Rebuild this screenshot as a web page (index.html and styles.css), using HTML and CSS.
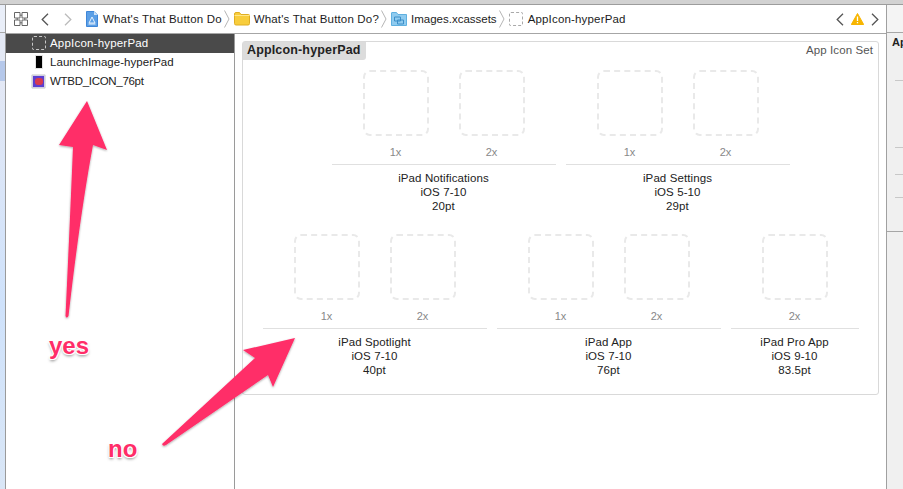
FILE: index.html
```html
<!DOCTYPE html>
<html lang="en">
<head>
<meta charset="utf-8">
<title>AppIcon-hyperPad</title>
<link rel="stylesheet" href="styles.css">
</head>
<body>
<div class="window">
  <div class="titlestrip"></div>
  <div class="workspace">
    <aside class="sidestrip">
      <div class="strip-top"></div>
      <div class="strip-a"></div>
      <div class="strip-sel"></div>
      <div class="strip-b"></div>
    </aside>
    <div class="editor">
      <header class="jumpbar">
        <svg class="gridicon" width="14" height="14" viewBox="0 0 14 14"><path d="M.5.5h5.500v5.500H.5zM8 .5h5.500v5.500H8zM.5 8h5.500v5.500H.5zM8 8h5.500v5.500H8zM6 3.200h2M6 10.800h2M3.200 6v2M10.800 6v2" fill="none" stroke="#666"/></svg>
        <svg class="nav nav-back" width="8" height="13" viewBox="0 0 8 13"><path d="M7 .8 1.200 6.500 7 12.200" fill="none" stroke="#555" stroke-width="1.300"/></svg>
        <svg class="nav nav-fwd" width="8" height="13" viewBox="0 0 8 13"><path d="M1 .8 6.800 6.500 1 12.200" fill="none" stroke="#bbb" stroke-width="1.300"/></svg>
        <span class="crumb crumb-first">
          <svg width="12" height="16" viewBox="0 0 12 16"><path d="M.5.5h7.500l3.500 3.500v11.500H.5z" fill="#5b9fe6" stroke="#3f86d8"/><path d="M8 .5v3.500h3.500z" fill="#cfe3f8"/><path d="M6 6 3 12h6zM2.500 13h7" fill="none" stroke="#e8f2fc"/></svg>
          What's That Button Do
        </span>
        <svg class="sep" width="6" height="18" viewBox="0 0 6 18"><path d="M.5.5 5 9 .5 17.500" fill="none" stroke="#b5b5b5"/></svg>
        <span class="crumb">
          <svg width="16" height="14" viewBox="0 0 16 14"><path d="M.5 2q0-1.500 1.500-1.500h3.500l1.500 2h7.500q1 0 1 1v8q0 1.500-1.500 1.500H2q-1.500 0-1.500-1.500z" fill="#f8cd3c" stroke="#e0ae22"/><path d="M.5 3.500h15" stroke="#ffe68a"/></svg>
          What's That Button Do?
        </span>
        <svg class="sep" width="6" height="18" viewBox="0 0 6 18"><path d="M.5.5 5 9 .5 17.500" fill="none" stroke="#b5b5b5"/></svg>
        <span class="crumb crumb-assets">
          <svg width="16" height="14" viewBox="0 0 16 14"><path d="M.5 1q0-.5.500-.5h4.500l1.500 2h8.500v11H.5z" fill="#8fcbef" stroke="#5fb0e0"/><path d="M3.500 5h6v4h-6zM6.500 8h6v4h-6z" fill="none" stroke="#3d8fc8"/></svg>
          Images.xcassets
        </span>
        <svg class="sep" width="6" height="18" viewBox="0 0 6 18"><path d="M.5.5 5 9 .5 17.500" fill="none" stroke="#b5b5b5"/></svg>
        <span class="crumb crumb-last">
          <span class="dashicon"></span>
          AppIcon-hyperPad
        </span>
        <span class="issues">
          <svg width="8" height="13" viewBox="0 0 8 13"><path d="M7 .8 1.200 6.500 7 12.200" fill="none" stroke="#555" stroke-width="1.300"/></svg>
          <svg width="13" height="12" viewBox="0 0 13 12"><path d="M6.500.5 12.700 11.500H.3z" fill="#f7b500" stroke="#f7b500" stroke-linejoin="round"/><path d="M6.500 3.500v4.500M6.500 9v1.200" stroke="#fff" stroke-width="1.300"/></svg>
          <svg width="8" height="13" viewBox="0 0 8 13"><path d="M1 .8 6.800 6.500 1 12.200" fill="none" stroke="#555" stroke-width="1.300"/></svg>
        </span>
      </header>
      <div class="panes">
        <nav class="navigator">
          <div class="item item-selected"><span class="dashicon"></span><span>AppIcon-hyperPad</span></div>
          <div class="item item-tight"><span class="launchslot"><span class="launchicon"></span></span><span>LaunchImage-hyperPad</span></div>
          <div class="item item-caps"><span class="imgicon"><span class="imgdot"></span></span><span>WTBD_ICON_76pt</span></div>
        </nav>
        <main class="canvas">
          <section class="card">
            <div class="card-head">
              <span class="card-title">AppIcon-hyperPad</span>
              <span class="card-type">App Icon Set</span>
            </div>
            <div class="row row-one">
              <div class="group">
                <div class="slots"><div class="slot"><div class="well"></div><span>1x</span></div><div class="slot"><div class="well"></div><span>2x</span></div></div>
                <div class="caption">iPad Notifications<br>iOS 7-10<br>20pt</div>
              </div>
              <div class="group">
                <div class="slots"><div class="slot"><div class="well"></div><span>1x</span></div><div class="slot"><div class="well"></div><span>2x</span></div></div>
                <div class="caption">iPad Settings<br>iOS 5-10<br>29pt</div>
              </div>
            </div>
            <div class="row row-two">
              <div class="group">
                <div class="slots"><div class="slot"><div class="well"></div><span>1x</span></div><div class="slot"><div class="well"></div><span>2x</span></div></div>
                <div class="caption">iPad Spotlight<br>iOS 7-10<br>40pt</div>
              </div>
              <div class="group">
                <div class="slots"><div class="slot"><div class="well"></div><span>1x</span></div><div class="slot"><div class="well"></div><span>2x</span></div></div>
                <div class="caption">iPad App<br>iOS 7-10<br>76pt</div>
              </div>
              <div class="group">
                <div class="slots"><div class="slot"><div class="well"></div><span>2x</span></div></div>
                <div class="caption">iPad Pro App<br>iOS 9-10<br>83.5pt</div>
              </div>
            </div>
          </section>
        </main>
      </div>
    </div>
    <aside class="inspector">
      <div class="insp-top"></div>
      <div class="insp-body">
        <div class="insp-title">Ap</div>
        <div class="rule rule-a"></div>
        <div class="rule rule-b"></div>
        <div class="rule rule-c"></div>
        <div class="rule rule-d"></div>
      </div>
      <div class="insp-foot"></div>
    </aside>
  </div>
  <svg class="annotations" width="903" height="489" viewBox="0 0 903 489">
    <defs>
      <filter id="shadow" x="-20%" y="-20%" width="140%" height="140%"><feDropShadow dx="0" dy="1" stdDeviation="1" flood-color="#000" flood-opacity=".35"/></filter>
    </defs>
    <path d="M87 101 59 145 73 147Q70 220 65.500 316Q66.500 319 68.500 316Q80 215 93 145L107 150z" fill="#ff2d68" filter="url(#shadow)"/>
    <path d="M295 338 243 350 255 358 162 444Q163 447 166 445L268 375 273 387z" fill="#ff2d68" filter="url(#shadow)"/>
  </svg>
  <span class="note note-yes">yes</span>
  <span class="note note-no">no</span>
</div>
</body>
</html>
```
FILE: styles.css
```css
* { box-sizing: border-box; }
html, body { margin: 0; padding: 0; }
body { font-family: "Liberation Sans", Arial, sans-serif; background: #fff; color: #222; overflow: hidden; }
.window { position: relative; width: 903px; height: 489px; display: flex; flex-direction: column; overflow: hidden; }
.titlestrip { height: 5px; background: #d2d2d2; border-bottom: 1px solid #9c9c9c; flex: none; }
.workspace { flex: 1; display: flex; min-height: 0; }

.sidestrip { width: 6px; flex: none; display: flex; flex-direction: column; border-right: 1px solid #9a9a9a; }
.strip-top { height: 28px; background: #e9eef8; border-bottom: 1px solid #a8a8a8; }
.strip-a { height: 28px; background: #e4e9f5; }
.strip-sel { height: 20px; background: #b5c8ea; }
.strip-b { flex: 1; background: linear-gradient(#e3e8f5 0, #cfe2fb 55%, #d9e6f6 100%); }

.editor { flex: 1; display: flex; flex-direction: column; min-width: 0; }
.jumpbar { height: 29px; flex: none; display: flex; align-items: center; border-bottom: 1px solid #a6a6a6; padding-left: 8px; font-size: 11.5px; color: #1c1c1c; letter-spacing: .17px; }
.gridicon { flex: none; margin-right: 13px; }
.nav { flex: none; }
.nav-fwd { margin-left: 15px; margin-right: 14px; }
.crumb { display: flex; align-items: center; gap: 4px; white-space: nowrap; }
.crumb-first { gap: 5px; }
.crumb-assets { letter-spacing: 0; }
.crumb-last { gap: 5px; }
.sep { flex: none; margin: 0 4px 0 2px; }
.issues { margin-left: auto; margin-right: 7px; display: flex; align-items: center; gap: 7px; }

.dashicon { width: 14px; height: 14px; flex: none; border: 1px dashed #a9a9a9; border-radius: 2px; display: block; }

.panes { flex: 1; display: flex; min-height: 0; }
.navigator { width: 229px; flex: none; border-right: 1px solid #9a9a9a; background: #fff; font-size: 11.5px; color: #222; }
.item { height: 19px; display: flex; align-items: center; padding: 0 0 1px 26px; gap: 4px; letter-spacing: .2px; }
.item-selected { background: #4a4a4a; color: #fff; }
.item-selected .dashicon { border-color: #c9c9c9; }
.item-tight { letter-spacing: .05px; }
.item-caps { letter-spacing: -.3px; }
.launchslot { width: 14px; height: 14px; flex: none; display: flex; justify-content: center; }
.launchicon { width: 8px; height: 14px; display: block; background: #000; border: 1px solid #e2e2e2; }
.imgicon { width: 13px; height: 13px; flex: none; display: flex; align-items: center; justify-content: center; background: #5b3fd0; border: 1px solid #cfcfe0; margin-right: 1px; box-shadow: 0 0 1px #555; }
.imgdot { width: 8px; height: 7px; border-radius: 3px; background: #d83a4f; }

.canvas { flex: 1; background: #fff; padding: 7px 7px 0 7px; min-width: 0; }
.card { height: 354px; border: 1px solid #d9d9d9; border-radius: 3px; background: #fff; }
.card-head { display: flex; justify-content: space-between; align-items: flex-start; height: 28px; }
.card-title { height: 18px; width: 123px; padding-left: 4px; line-height: 17px; background: #dcdcdc; border-radius: 0 0 3px 0; font-size: 12.5px; font-weight: bold; letter-spacing: .15px; color: #222; white-space: nowrap; }
.card-type { font-size: 11.5px; color: #555; margin-right: 5px; margin-top: 2px; letter-spacing: .1px; }

.row { display: flex; justify-content: center; gap: 10px; }
.row-one { height: 164px; }
.group { display: flex; flex-direction: column; align-items: stretch; }
.slots { display: flex; justify-content: center; padding: 0 16px; border-bottom: 1px solid #e0e0e0; height: 95px; }
.slot { width: 96px; display: flex; flex-direction: column; align-items: center; }
.well { width: 66px; height: 66px; border: 2px dashed #e9e9e9; border-radius: 7px; }
.slot span { margin-top: 10px; font-size: 11px; line-height: 13px; color: #888; }
.caption { margin-top: 6px; text-align: center; font-size: 11.5px; line-height: 14px; color: #222; letter-spacing: .1px; }

.inspector { width: 17px; flex: none; background: #f0f0f0; border-left: 1px solid #a0a0a0; display: flex; flex-direction: column; overflow: hidden; }
.insp-top { height: 28px; flex: none; border-bottom: 1px solid #a6a6a6; background: #f4f4f4; }
.insp-body { height: 199px; flex: none; border-bottom: 1px solid #a6a6a6; padding-left: 5px; }
.insp-title { font-size: 11px; font-weight: bold; line-height: 13px; margin-top: 3px; white-space: nowrap; color: #222; }
.rule { height: 1px; background: #c8c8c8; margin-left: 3px; }
.rule-a { margin-top: 31px; }
.rule-b { margin-top: 66px; }
.rule-c { margin-top: 26px; }
.rule-d { margin-top: 22px; }
.insp-foot { flex: 1; }

.annotations { position: absolute; left: 0; top: 0; pointer-events: none; }
.note { position: absolute; font-weight: bold; font-size: 24px; line-height: 26px; color: #ff2d68; text-shadow: 0 0 2px #fff, 1px 1px 0 #fff, -1px -1px 0 #fff, 1px -1px 0 #fff, -1px 1px 0 #fff, 0 2px 3px rgba(0,0,0,.5); }
.note-yes { left: 49px; top: 333px; }
.note-no { left: 108px; top: 436px; }
```
